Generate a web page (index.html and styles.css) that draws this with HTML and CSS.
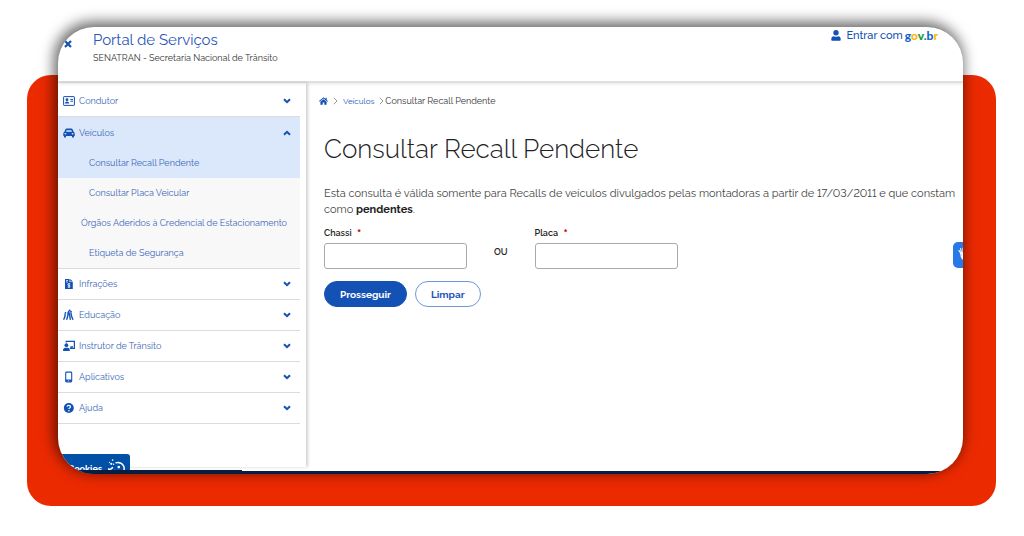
FILE: index.html
```html
<!DOCTYPE html>
<html lang="pt-BR">
<head>
    <meta charset="UTF-8">
    <meta name="viewport" content="width=device-width, initial-scale=1.0">
    <title>Portal de Serviços - SENATRAN</title>
    <link rel="stylesheet" href="styles.css">
</head>
<body>
    <svg class="sprite" aria-hidden="true">
        <symbol id="chevron" viewBox="0 0 8 6">
            <path d="M1 1.2 L4 4.2 L7 1.2" fill="none" stroke="currentColor" stroke-width="2"/>
        </symbol>
    </svg>

    <div class="backdrop">
        <div class="window">
            <header class="header">
                <button class="close" aria-label="Fechar menu">
                    <svg width="8" height="8" viewBox="0 0 8 8"><path d="M1 1 L7 7 M7 1 L1 7" stroke="currentColor" stroke-width="2.2"/></svg>
                </button>
                <div class="brand">
                    <a class="title" href="#">Portal de Serviços</a>
                    <div class="subtitle">SENATRAN - Secretaria Nacional de Trânsito</div>
                </div>
                <a class="login" href="#">
                    <svg width="10" height="11" viewBox="0 0 10 11" fill="currentColor"><circle cx="5" cy="2.8" r="2.7"/><path d="M0.3 9.2 Q0.3 6.2 3 6.2 Q5 7.2 7 6.2 Q9.7 6.2 9.7 9.2 V10 Q9.7 10.8 8.8 10.8 H1.2 Q0.3 10.8 0.3 10 Z"/></svg>
                    <span class="enter">Entrar com</span>
                    <span class="govbr"><span class="blue">g</span><span class="yellow">o</span><span class="green">v.</span><span class="blue">b</span><span class="yellow">r</span></span>
                </a>
            </header>

            <div class="page">
                <nav class="sidebar">
                    <ul class="menu">
                        <li>
                            <button class="item">
                                <svg class="icon" viewBox="0 0 12 12"><rect x="0.6" y="1.6" width="10.8" height="8.8" rx="0.5" fill="none" stroke="currentColor"/><circle cx="4" cy="4.7" r="1.4" fill="currentColor"/><path d="M1.8 8.6 Q1.8 6.6 4 6.6 Q6.2 6.6 6.2 8.6 Z" fill="currentColor"/><path d="M7.4 4.4 H10 M7.4 6.2 H10" stroke="currentColor"/></svg>
                                <span>Condutor</span>
                                <svg class="arrow"><use href="#chevron"/></svg>
                            </button>
                        </li>
                        <li>
                            <button class="item open active" aria-expanded="true">
                                <svg class="icon" viewBox="0 0 12 12"><path fill="currentColor" fill-rule="evenodd" d="M1.3 5 L2.2 2.7 Q2.6 1.6 3.8 1.6 H8.2 Q9.4 1.6 9.8 2.7 L10.7 5 Q11.7 5.4 11.7 6.4 V9 H11 V10 Q11 10.6 10.4 10.6 H9.6 Q9 10.6 9 10 V9 H3 V10 Q3 10.6 2.4 10.6 H1.6 Q1 10.6 1 10 V9 H0.3 V6.4 Q0.3 5.4 1.3 5 Z M3 4.8 H9 L8.4 3.2 H3.6 Z M1.4 6.8 A1 0.8 0 1 0 3.4 6.8 A1 0.8 0 1 0 1.4 6.8 Z M8.6 6.8 A1 0.8 0 1 0 10.6 6.8 A1 0.8 0 1 0 8.6 6.8 Z"/></svg>
                                <span>Veículos</span>
                                <svg class="arrow up"><use href="#chevron"/></svg>
                            </button>
                            <ul class="submenu">
                                <li><a class="active" href="#">Consultar Recall Pendente</a></li>
                                <li><a href="#">Consultar Placa Veicular</a></li>
                                <li><a class="long" href="#">Órgãos Aderidos à Credencial de Estacionamento</a></li>
                                <li><a href="#">Etiqueta de Segurança</a></li>
                            </ul>
                        </li>
                        <li>
                            <button class="item">
                                <svg class="icon" viewBox="0 0 12 12"><path d="M2 1 H6.6 V4 H9.8 V11 H2 Z M7.3 1 L9.8 3.4 H7.3 Z" fill="currentColor"/><path d="M3 2.5 H5 M3 4 H5" stroke="#fff" stroke-width="0.7"/><path d="M7.2 5.9 Q4.8 5.2 4.8 6.5 Q4.9 7.3 6 7.4 Q7.2 7.6 7.1 8.5 Q6.8 9.5 4.7 8.9 M6 5 V10" fill="none" stroke="#fff" stroke-width="0.8"/></svg>
                                <span>Infrações</span>
                                <svg class="arrow"><use href="#chevron"/></svg>
                            </button>
                        </li>
                        <li>
                            <button class="item">
                                <svg class="icon" viewBox="0 0 12 12"><g fill="none" stroke="currentColor" stroke-width="1.4"><path d="M5.4 2 L6.6 6 L7.4 10.8 M5.2 3 L4.8 7 L3.6 10.8"/><path d="M2.2 4.5 L1.9 7.5 L0.6 10.8 M7.8 3.4 L8.6 7.2 L10 10.8"/></g><g fill="currentColor"><circle cx="6.6" cy="1.5" r="1"/><circle cx="2.5" cy="3.8" r="0.9"/><circle cx="8" cy="2.6" r="0.9"/></g></svg>
                                <span>Educação</span>
                                <svg class="arrow"><use href="#chevron"/></svg>
                            </button>
                        </li>
                        <li>
                            <button class="item">
                                <svg class="icon" viewBox="0 0 12 12"><circle cx="3.4" cy="5.2" r="1.9" fill="currentColor"/><path d="M0 11 Q0 7.8 2.4 7.8 H4.4 Q6.8 7.8 6.8 11 Z" fill="currentColor"/><path d="M3.2 2.6 V1.4 H11.4 V8.4 H6.8 M8 8 V6.8 H10" fill="none" stroke="currentColor" stroke-width="1.2"/></svg>
                                <span>Instrutor de Trânsito</span>
                                <svg class="arrow"><use href="#chevron"/></svg>
                            </button>
                        </li>
                        <li>
                            <button class="item">
                                <svg class="icon" viewBox="0 0 12 12"><rect x="2.7" y="1.1" width="6" height="9.8" rx="0.8" fill="none" stroke="currentColor" stroke-width="1.1"/><path d="M2.7 9.6 H8.7" stroke="currentColor" stroke-width="2"/><circle cx="5.7" cy="9.7" r="0.5" fill="#fff"/></svg>
                                <span>Aplicativos</span>
                                <svg class="arrow"><use href="#chevron"/></svg>
                            </button>
                        </li>
                        <li>
                            <button class="item">
                                <svg class="icon" viewBox="0 0 12 12"><circle cx="5.8" cy="6" r="5" fill="currentColor"/><path d="M4.1 4.8 Q4.2 3.3 5.8 3.3 Q7.5 3.3 7.5 4.7 Q7.5 5.5 6.6 6 Q5.9 6.3 5.9 7.1" fill="none" stroke="#fff" stroke-width="1.2"/><circle cx="5.9" cy="8.7" r="0.8" fill="#fff"/></svg>
                                <span>Ajuda</span>
                                <svg class="arrow"><use href="#chevron"/></svg>
                            </button>
                        </li>
                    </ul>
                </nav>

                <main class="content">
                    <nav class="breadcrumb" aria-label="Navegação">
                        <a href="#" aria-label="Início">
                            <svg class="home" viewBox="0 0 9 8"><path fill="currentColor" d="M4.5 0.2 L6.5 1.9 V0.8 H7.7 V2.9 L9 4 L8.4 4.7 L4.5 1.4 L0.6 4.7 L0 4 Z M1.4 4.8 L4.5 2.2 L7.6 4.8 V7.8 H5.3 V5.5 H3.7 V7.8 H1.4 Z"/></svg>
                        </a>
                        <svg class="sep" viewBox="0 0 5 8"><path d="M0.8 0.8 L4 4 L0.8 7.2"/></svg>
                        <a class="crumb" href="#">Veículos</a>
                        <span class="current">
                            <svg class="sep" viewBox="0 0 5 8"><path d="M0.8 0.8 L4 4 L0.8 7.2"/></svg>
                            Consultar Recall Pendente
                        </span>
                    </nav>

                    <h1>Consultar Recall Pendente</h1>
                    <p>Esta consulta é válida somente para Recalls de veículos divulgados pelas montadoras a partir de 17/03/2011 e que constam como <strong>pendentes</strong>.</p>

                    <form>
                        <div class="fields">
                            <div class="field">
                                <label for="chassi">Chassi <span class="required">*</span></label>
                                <input type="text" id="chassi">
                            </div>
                            <span class="or">OU</span>
                            <div class="field">
                                <label for="placa">Placa <span class="required">*</span></label>
                                <input type="text" id="placa">
                            </div>
                        </div>
                        <div class="actions">
                            <button type="button" class="btn primary">Prosseguir</button>
                            <button type="reset" class="btn">Limpar</button>
                        </div>
                    </form>
                </main>
            </div>

            <footer class="footer"></footer>

            <button class="libras" aria-label="Acessível em Libras">
                <svg width="10" height="14" viewBox="0 0 10 14"><path d="M4.5 12 Q2.6 9 2.8 6.5 L1 3.5 M3.5 6 L2.6 1.5 M5 5.5 L5 1 M6.5 6 L7.5 1.5" fill="none" stroke="#fff" stroke-width="1.1" stroke-linecap="round"/><path d="M3 5.5 H8 V9 L5.5 12 L4 11 Z" fill="#fff"/></svg>
            </button>
            <button class="cookies">
                <span>Cookies</span>
                <svg width="20" height="20" viewBox="0 0 20 20" fill="none" stroke="#fff" stroke-width="1.5"><path d="M9 4.5 Q15 3 17.5 7.5 Q20 13 15 17 Q9 20 4 16 Q1.5 14 2 11 Q5 12 6 9"/><g fill="#fff" stroke="none"><circle cx="12.5" cy="9" r="1.4"/><circle cx="8.5" cy="13" r="1.2"/><circle cx="4.5" cy="5.5" r="1.2"/><circle cx="6" cy="1.5" r="0.9"/><circle cx="7" cy="6" r="0.8"/><circle cx="2.5" cy="4" r="0.7"/></g></svg>
            </button>
        </div>
    </div>
</body>
</html>
```
FILE: styles.css
```css
* {
    box-sizing: border-box;
}
body {
    margin: 0;
    padding: 75px 28px 30px 27px;
    min-height: 100vh;
    display: flex;
    background-color: #fff;
    color: #333;
    font-family: Raleway, Lato, "Open Sans", sans-serif;
    font-size: 9px;
    font-variant-numeric: lining-nums;
}
a {
    color: inherit;
    text-decoration: none;
}
button {
    font: inherit;
    color: inherit;
    border: none;
    background: none;
    padding: 0;
    cursor: pointer;
}
ul {
    list-style: none;
    margin: 0;
    padding: 0;
}
.sprite {
    position: absolute;
    width: 0;
    height: 0;
}
.backdrop {
    flex: 1;
    display: flex;
    padding: 0 33px 32px 31px;
    background-color: #ec2a00;
    border-radius: 24px;
}
.window {
    position: relative;
    flex: 1;
    display: flex;
    flex-direction: column;
    margin-top: -48px;
    overflow: hidden;
    background-color: #fff;
    border-radius: 36px;
    box-shadow: -2px -3px 14px 2px rgba(0,0,0,0.6);
}
.header {
    display: flex;
    align-items: flex-start;
    height: 56px;
    padding: 3px 25px 0 6px;
    border-bottom: 2px solid #e0e0e0;
    box-shadow: 0 1px 3px rgba(0,0,0,0.1);
    color: #1351b4;
}
.close {
    margin: 10px 21px 0 0;
    line-height: 0;
}
.brand {
    flex: 1;
}
.title {
    display: block;
    font-size: 15px;
    line-height: 20px;
    color: #2c56b8;
}
.subtitle {
    line-height: 16px;
    color: #333;
}
.login {
    display: flex;
    align-items: center;
    line-height: 10px;
    font-weight: 500;
}
.enter {
    margin: 0 2px 0 5px;
    font-size: 11px;
}
.govbr {
    font-family: Lato, "Open Sans", sans-serif;
    font-size: 12px;
    font-weight: 900;
}
.blue {
    color: #1565c8;
}
.yellow {
    color: #fbb615;
}
.green {
    color: #149b35;
}
.page {
    flex: 1;
    display: flex;
}
.sidebar {
    width: 248px;
    padding: 3px 6px 0 0;
    margin-bottom: 4px;
    box-shadow: 2px 0 3px rgba(0,0,0,0.18);
    color: #1351b4;
}
.menu > li {
    border-bottom: 1px solid #dcdcdc;
}
.item {
    display: flex;
    align-items: center;
    gap: 4px;
    width: 100%;
    height: 30px;
    padding: 0 9px 0 5px;
    text-align: left;
}
.item.open {
    height: 31px;
}
.item span {
    flex: 1;
    color: #3c68b8;
}
.icon {
    width: 12px;
    height: 12px;
}
.arrow {
    width: 8px;
    height: 6px;
}
.up {
    transform: rotate(180deg);
}
.active {
    background-color: #dbe8fb;
}
.submenu {
    background-color: #f8f8f8;
}
.submenu a {
    display: block;
    padding-left: 31px;
    line-height: 30px;
    color: #3c68b8;
}
.submenu a.long {
    padding-left: 23px;
}
.content {
    flex: 1;
    padding: 10px 4px 0 18px;
}
.breadcrumb {
    display: flex;
    align-items: center;
    gap: 5px;
    line-height: 16px;
    margin-left: -5px;
    color: #1351b4;
}
.home {
    display: block;
    width: 9px;
    height: 8px;
}
.sep {
    width: 5px;
    height: 8px;
    fill: none;
    stroke: #999;
}
.crumb {
    font-size: 8px;
}
.current {
    display: flex;
    align-items: center;
    gap: 1px;
    color: #333;
}
h1 {
    margin: 22px 0 19px;
    font-size: 26px;
    line-height: 36px;
    font-weight: 300;
    color: #222;
}
p {
    margin: 0 0 8px;
    font-size: 11px;
    line-height: 16px;
    color: #444;
}
strong {
    color: #222;
}
.fields {
    display: flex;
    gap: 27px;
    color: #222;
    font-weight: 600;
}
.field {
    width: 143px;
}
label {
    display: block;
    line-height: 14px;
    margin-bottom: 3px;
}
.required {
    margin-left: 3px;
    font-size: 14px;
    line-height: 10px;
    vertical-align: bottom;
    color: #c00;
}
.or {
    padding-top: 19px;
    line-height: 14px;
}
input {
    display: block;
    width: 100%;
    height: 26px;
    border: 1px solid #aaa;
    border-radius: 3px;
    background-color: #fff;
}
.actions {
    display: flex;
    gap: 8px;
    margin-top: 12px;
}
.btn {
    height: 26px;
    padding: 0 15px;
    border: 1px solid #6f97d8;
    border-radius: 13px;
    color: #1f55b8;
    font-size: 10px;
    font-weight: 700;
}
.primary {
    background-color: #1351b4;
    border-color: #1351b4;
    color: #fff;
}
.footer {
    height: 3px;
    background-color: #071d41;
}
.libras {
    position: absolute;
    right: -12px;
    top: 215px;
    width: 22px;
    height: 26px;
    padding: 3px 5px;
    background-color: #2879e8;
    border-radius: 5px;
    text-align: left;
}
.cookies {
    position: absolute;
    left: 0;
    bottom: -14px;
    z-index: 1;
    display: flex;
    gap: 5px;
    width: 72px;
    height: 34px;
    padding: 4px 4px 0 10px;
    background-color: #0050a8;
    border-radius: 3px;
    color: #fff;
    font-weight: 700;
}
.cookies span {
    padding-top: 6px;
}
.footer::after {
    content: "";
    position: absolute;
    left: 0;
    bottom: 0;
    z-index: 2;
    width: 184px;
    height: 4px;
    background-color: #071d41;
}
```
